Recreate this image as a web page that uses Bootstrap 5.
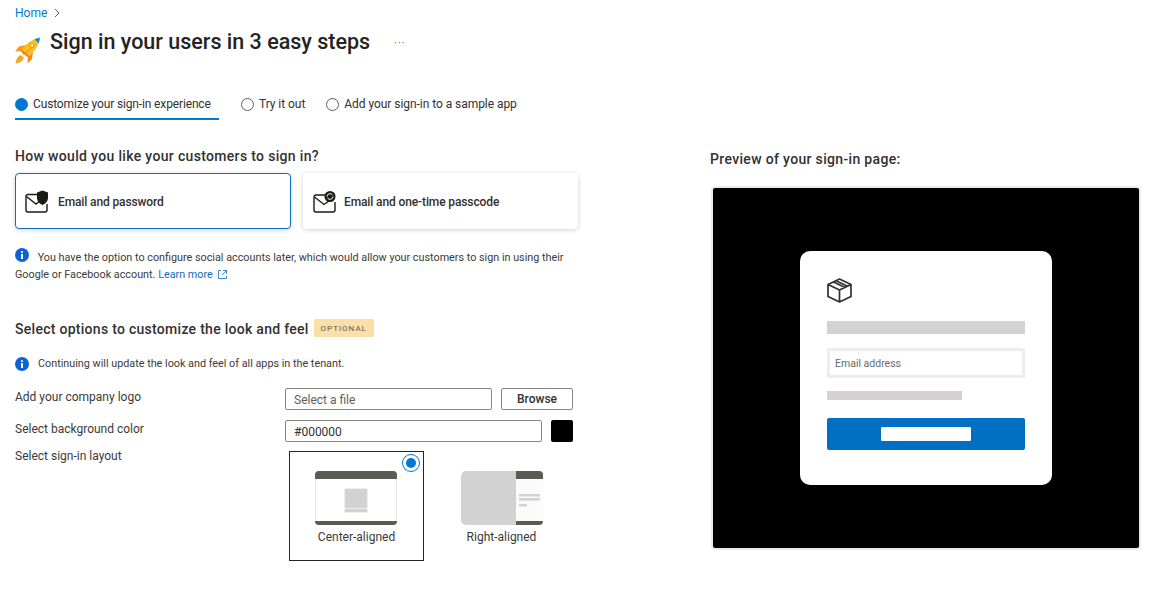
<!DOCTYPE html>
<html lang="en"><head><meta charset="utf-8"><title>Sign in your users</title>
<link href="https://cdn.jsdelivr.net/npm/bootstrap@5.3.0/dist/css/bootstrap.min.css" rel="stylesheet">
<style>
html,body{height:600px;overflow:hidden}
body{font-family:Roboto,"Noto Sans",sans-serif;font-size:12px;color:#323130;background:#fff;line-height:16px}
.pg{padding:5px 0 0 15px;width:1141px}
.crumb{height:16px;color:#0078d4;gap:7px;font-size:12px}
.ttl{height:32px;margin-top:5px;margin-left:-1px}
.ttl h1{font-size:21.500px;font-weight:500;margin:0 0 0 10px;line-height:32px;color:#252423}
.more{margin-left:24px;font-size:11px;color:#605e5c;letter-spacing:1px;line-height:10px;padding-top:3px}
.rocket{margin-top:11px;margin-left:1px;margin-right:-1px}
.steps{margin-top:28px;height:34px;gap:22px}
.stp{display:flex;align-items:center;gap:5px;height:34px;padding-top:4px;color:#323130;white-space:nowrap;letter-spacing:-.05px;border-bottom:2px solid transparent}
.stp.on{border-bottom-color:#0078d4;width:204px;letter-spacing:-.14px}
.dot{width:13px;height:13px;border-radius:50%;border:1px solid #605e5c;display:block;flex:none}
.dot.fill{background:#0078d4;border-color:#0078d4}
.cols{gap:132px}
.lft{width:563px;flex:none}
.hd{font-size:14px;font-weight:500;margin:0;line-height:18px;color:#323130;letter-spacing:.33px}
.sec .hd{letter-spacing:.28px}
.mt-q{margin-top:27px}
.opts{gap:12px;margin-top:8px}
.opt{height:56px;width:276px;border-radius:4px;box-shadow:0 1px 5px rgba(0,0,0,.18);background:#fff;gap:9px;padding:1px 0 0 10px;font-weight:500;color:#323130;letter-spacing:-.12px}
.opt.sel{border:1px solid #0f6cbd;padding-left:9px}
.opt2{width:275px;padding-left:10px;gap:8px}
.inf{margin-top:19px;font-size:10.800px;line-height:17px;color:#3b3a39;width:563px;white-space:nowrap}
.inf svg{vertical-align:-1px;margin-right:6px}
.lnk{color:#0f6cbd;text-decoration:none}
.sec{margin-top:37px;height:22px;gap:5px}
.opt-tag{background:#fadfa8;color:#5e5a50;font-size:8px;font-weight:400;letter-spacing:1px;height:18px;line-height:19px;padding:0 7px;border-radius:1px;margin-top:-1px}
.note{margin-top:14px;font-size:10.800px;height:16px;gap:9px;color:#3b3a39}
.frm{margin-top:16px}
.frow{display:flex}
.lab{width:270px;flex:none;color:#3b3a39;margin-top:1px}
.fld{height:22px;border:1px solid #8a8886;border-radius:2px;padding:0 8px;line-height:22px;color:#605e5c;background:#fff}
.brow{width:72px;height:22px;border:1px solid #8a8886;border-radius:2px;font-weight:500;text-align:center;line-height:20px;margin-left:9px;color:#323130}
.sw{width:22px;height:22px;background:#000;border-radius:2px;margin-left:9px}
.r2{margin-top:10px}
.r3{margin-top:9px}
.r3 .lab{margin-top:-3px}
.tiles{margin-left:4px}
.tile{width:135px;height:110px;position:relative;text-align:center;padding-top:19px;border:1px solid transparent;color:#3b3a39}
.tile.act{border-color:#252423}
.tile svg.th{display:block;margin:0 auto 4px}
.tile.act svg.th{position:relative;left:-1px}
.rad{position:absolute;top:2px;right:3px;width:18px;height:18px;border:1px solid #0078d4;border-radius:50%;display:flex;align-items:center;justify-content:center}
.rad i{display:block;width:10px;height:10px;border-radius:50%;background:#0078d4}
.tile2{margin-left:10px;width:135px}
.rgt{flex:1;min-width:0;margin-top:30px}
.frame{margin:18px 0 0 1px;height:364px;width:430px;background:#000;border:2px solid #ebebeb;border-radius:4px;display:flex;align-items:center;justify-content:center}
.sgn{width:252px;height:234px;background:#fff;border-radius:10px;padding:27px}
.bar1{height:13px;background:#d4d2d3;margin-top:18px}
.em{height:30px;border:3px solid #ededed;margin-top:14px;padding-left:5px;font-size:10.500px;line-height:26px;color:#6b6967}
.bar2{height:9px;width:135px;background:#d4d2d3;margin-top:13px}
.bt{height:32px;background:#0170c4;border-radius:2px;margin-top:18px;display:flex;align-items:center;justify-content:center}
.bt i{display:block;width:90px;height:14px;background:#fff;border-radius:1px}
</style></head><body>
<div class="pg">
 <div class="d-flex align-items-center crumb"><a class="lnk" style="color:#0078d4" href="#">Home</a><svg width="6" height="10" viewBox="0 0 6 10"><path d="M1 1l4 4-4 4" fill="none" stroke="#605e5c"/></svg></div>
 <div class="d-flex ttl">
  <svg class="rocket" width="26" height="27" viewBox="0 0 26 27">
   <path d="M11 8L4 9.500 0 14.500l7-.5z" fill="#f59a23"/><path d="M18 15l-1 7-4.500 4.500.5-7z" fill="#f08a1d"/>
   <path d="M6 18c-3 1-5 4-5.500 8.500C5 26 8 24 9 21z" fill="#f7a823"/>
   <path d="M6 14.500C9.500 8 15 3 25 .5 23.500 10 18.500 16 12.500 20z" fill="#fbbf1d"/>
   <path d="M6 14.500l6.500 5.500 1.500-1L7 13z" fill="#e67c12"/><path d="M8 18L19 9" stroke="#e88b10" fill="none"/>
   <path d="M19.500 2.200L25 .5l-1.200 6z" fill="#1f86d6"/><circle cx="17" cy="8.500" r="2" fill="#fff3c4" stroke="#e88b10"/>
  </svg>
  <h1>Sign in your users in 3 easy steps</h1>
  <span class="more align-self-center">···</span>
 </div>
 <div class="d-flex steps">
  <div class="stp on"><span class="dot fill"></span>Customize your sign-in experience</div>
  <div class="stp"><span class="dot"></span>Try it out</div>
  <div class="stp" style="margin-left:-1px"><span class="dot"></span>Add your sign-in to a sample app</div>
 </div>
 <div class="d-flex cols">
  <div class="lft">
   <h2 class="hd mt-q">How would you like your customers to sign in?</h2>
   <div class="d-flex opts">
    <div class="d-flex align-items-center opt sel"><svg width="24" height="23" viewBox="0 0 24 23"><path d="M13 4.500H3a2 2 0 0 0-2 2V20a2 2 0 0 0 2 2h17a2 2 0 0 0 2-2v-6" fill="none" stroke="#1b1a19" stroke-width="1.400"/><path d="M1.500 6.500l9.500 7.500 4-3" fill="none" stroke="#1b1a19" stroke-width="1.400"/><path d="M17.500.5l5.500 2v5.500c0 3-2.200 5.500-5.500 7-3.300-1.500-5.500-4-5.500-7V2.500z" fill="#1b1a19"/></svg>Email and password</div>
    <div class="d-flex align-items-center opt opt2"><svg width="23" height="22" viewBox="0 0 23 22"><path d="M12 4H3a2 2 0 0 0-2 2v13a2 2 0 0 0 2 2h17a2 2 0 0 0 2-2v-8" fill="none" stroke="#1b1a19" stroke-width="1.400"/><path d="M1.500 6l9.500 7.500 5-3.500" fill="none" stroke="#1b1a19" stroke-width="1.400"/><circle cx="17" cy="5.500" r="5.500" fill="#1b1a19"/><path d="M14 5.500a3 3 0 0 1 5.500-1.500M20 5.500a3 3 0 0 1-5.500 1.500" fill="none" stroke="#fff"/></svg>Email and one-time passcode</div>
   </div>
   <div class="inf"><svg width="14" height="14" viewBox="0 0 14 14"><circle cx="7" cy="7" r="7" fill="#0f62d6"/><rect x="6" y="6" width="2" height="5" fill="#fff"/><circle cx="7" cy="4" r="1.100" fill="#fff"/></svg> You have the option to configure social accounts later, which would allow your customers to sign in using their<br>Google or Facebook account. <a class="lnk" href="#">Learn more</a> &nbsp;<svg width="9" height="9" viewBox="0 0 9 9"><path d="M3 .5H.5v8h8V6M5 .5h3.500V4M8.500.5L4 5" fill="none" stroke="#0f6cbd" stroke-width=".8"/></svg></div>
   <div class="d-flex sec"><h2 class="hd">Select options to customize the look and feel</h2><span class="opt-tag">OPTIONAL</span></div>
   <div class="d-flex align-items-center note"><svg width="14" height="14" viewBox="0 0 14 14"><circle cx="7" cy="7" r="7" fill="#0f62d6"/><rect x="6" y="6" width="2" height="5" fill="#fff"/><circle cx="7" cy="4" r="1.100" fill="#fff"/></svg>Continuing will update the look and feel of all apps in the tenant.</div>
   <div class="frm">
    <div class="frow"><div class="lab">Add your company logo</div><div class="fld" style="width:207px">Select a file</div><div class="brow">Browse</div></div>
    <div class="frow r2"><div class="lab">Select background color</div><div class="fld" style="width:257px;color:#323130">#000000</div><div class="sw"></div></div>
    <div class="frow r3"><div class="lab">Select sign-in layout</div>
     <div class="d-flex tiles">
      <div class="tile act"><svg class="th" width="82" height="54" viewBox="0 0 82 54"><rect width="82" height="54" rx="4" fill="#e6e6e6"/><path d="M4 0h74a4 4 0 0 1 4 4v4H0V4a4 4 0 0 1 4-4z" fill="#5c5a55"/><rect x="1" y="8" width="80" height="42" fill="#fff"/><path d="M0 50h82a4 4 0 0 1-4 4H4a4 4 0 0 1-4-4z" fill="#5c5a55"/><rect x="29" y="17" width="24" height="25" fill="#efefef"/><rect x="30" y="18" width="22" height="19" fill="#d2d2d2"/><rect x="30" y="38" width="22" height="3" fill="#d2d2d2"/></svg>Center-aligned<span class="rad"><i></i></span></div>
      <div class="tile tile2"><svg class="th" width="82" height="54" viewBox="0 0 82 54"><path d="M55 0h23a4 4 0 0 1 4 4v4H55z" fill="#5c5a55"/><path d="M55 50h27a4 4 0 0 1-4 4H55z" fill="#5c5a55"/><rect x="55" y="8" width="27" height="42" fill="#fbfbfb"/><path d="M5 0h50v54H5a5 5 0 0 1-5-5V5a5 5 0 0 1 5-5z" fill="#d2d2d2"/><rect x="58" y="23" width="21" height="2.500" fill="#d2d2d2"/><rect x="58" y="27" width="21" height="2.500" fill="#d2d2d2"/><rect x="58" y="33" width="8" height="2.500" fill="#d2d2d2"/></svg>Right-aligned</div>
     </div>
    </div>
   </div>
  </div>
  <div class="rgt">
   <h2 class="hd">Preview of your sign-in page:</h2>
   <div class="frame"><div class="sgn">
    <svg class="d-block" width="25" height="25" viewBox="0 0 25 25"><path d="M12.500 1L24 6.500v12L12.500 24 1 18.500v-12zM1 6.500l11.500 5.500L24 6.500M12.500 12v12M6.500 4l11.500 5.500M9 2.800l11.500 5.500" fill="none" stroke="#323130" stroke-width="1.700" stroke-linejoin="round"/></svg>
    <div class="bar1"></div><div class="em">Email address</div><div class="bar2"></div><div class="bt"><i></i></div>
   </div></div>
  </div>
 </div>
</div>
</body></html>
